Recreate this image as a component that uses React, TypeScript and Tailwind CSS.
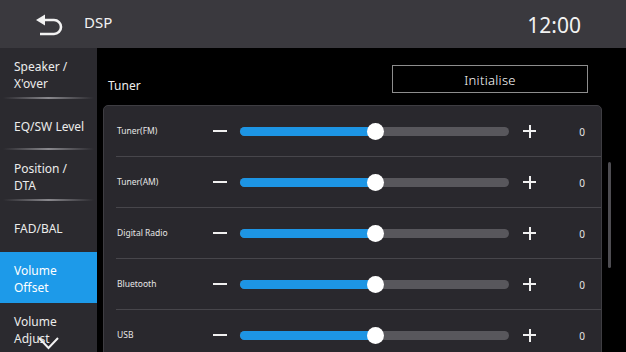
import React from "react";

const rows = ["Tuner(FM)", "Tuner(AM)", "Digital Radio", "Bluetooth", "USB"];

const sideItems: { label: string[]; selected?: boolean; sep?: boolean }[] = [
  { label: ["Speaker /", "X'over"], sep: true },
  { label: ["EQ/SW Level"], sep: true },
  { label: ["Position /", "DTA"], sep: true },
  { label: ["FAD/BAL"] },
  { label: ["Volume", "Offset"], selected: true },
  { label: ["Volume", "Adjust"] },
];

function BackIcon() {
  return (
    <svg width="27" height="22" viewBox="0 0 27 22" fill="none">
      <polygon points="0,6 9,0.5 9,11.5" fill="#f2f2f2" />
      <path d="M8 6 H18 A7 7 0 0 1 18 20 H4" stroke="#f2f2f2" strokeWidth="2.6" fill="none" />
    </svg>
  );
}

function Row({ label }: { label: string }) {
  return (
    <div className="ml-[12px] h-[51px] border-b border-[#47464b] flex items-center">
      <div className="w-[97px] pl-[1px] text-[8.5px] text-[#e6e6e6]">{label}</div>
      <div className="w-[14px] h-[2px] bg-[#f0f0f0]" />
      <div className="ml-[13px] w-[269px] h-[9px] rounded-full bg-[#58575c] relative">
        <div className="absolute left-0 top-0 h-[9px] w-[136px] rounded-full bg-[#1d95e4]" />
        <div className="absolute left-[127px] top-[-4px] w-[17px] h-[17px] rounded-full bg-white" />
      </div>
      <div className="ml-[14px] w-[13px] h-[13px] relative">
        <div className="absolute left-0 top-[5.5px] w-[13px] h-[2px] bg-[#f0f0f0]" />
        <div className="absolute left-[5.5px] top-0 w-[2px] h-[13px] bg-[#f0f0f0]" />
      </div>
      <div className="ml-[36px] w-[20px] pt-[2px] text-center text-[10px] text-[#e6e6e6]">0</div>
    </div>
  );
}

export default function App() {
  return (
    <div
      className="w-[626px] h-[352px] bg-black flex flex-col overflow-hidden text-white"
      style={{ fontFamily: '"Noto Sans", "Open Sans", sans-serif' }}
    >
      <div className="h-[48px] shrink-0 bg-[#3a393e] flex items-center">
        <div className="ml-[36px] mt-[1px]">
          <BackIcon />
        </div>
        <div className="ml-[21px] text-[15px] text-[#f2f2f2] mb-[3px]">DSP</div>
        <div className="ml-auto mr-[45px] text-[21px] text-[#f2f2f2] mt-[3px]">12:00</div>
      </div>
      <div className="flex flex-1 min-h-0">
        <div className="w-[97px] shrink-0 bg-[#2b2a2f] flex flex-col relative">
          {sideItems.map((it, i) => (
            <div
              key={i}
              className={`h-[51px] shrink-0 relative flex flex-col justify-center pl-[14px] pt-[3px] text-[12px] leading-[17px] ${
                it.selected ? "bg-[#1d9ae9] text-white" : "text-[#ececec]"
              }`}
            >
              {it.label.map((l, j) => (
                <div key={j}>{l}</div>
              ))}
              {it.sep && (
                <div className="absolute left-[3px] right-[3px] bottom-0 h-[2px] bg-gradient-to-r from-[#2b2a2f] via-[#8a898e] to-[#2b2a2f]" />
              )}
            </div>
          ))}
          <svg className="absolute left-[38px] top-[289px]" width="21" height="13" viewBox="0 0 21 13" fill="none">
            <path d="M1 1 L10.5 11 L20 1" stroke="#f2f2f2" strokeWidth="2" />
          </svg>
        </div>
        <div className="flex-1 relative pl-[6px]">
          <div className="h-[57px] flex items-start pt-[17px]">
            <div className="ml-[5px] mt-[12px] text-[12px] text-[#ededed]">Tuner</div>
            <div className="ml-auto mr-[38px] w-[196px] h-[28px] pt-[3px] border border-[#8d8d8d] flex items-center justify-center text-[13px] font-light text-white tracking-[0.3px]">
              Initialise
            </div>
          </div>
          <div className="w-[499px] h-[260px] bg-[#29282d] border border-[#3e3d42] rounded-[5px] overflow-hidden">
            {rows.map((r) => (
              <Row key={r} label={r} />
            ))}
          </div>
          <div className="absolute left-[511px] top-[114px] w-[3px] h-[106px] bg-[#4e4d52] rounded-full" />
        </div>
      </div>
    </div>
  );
}
